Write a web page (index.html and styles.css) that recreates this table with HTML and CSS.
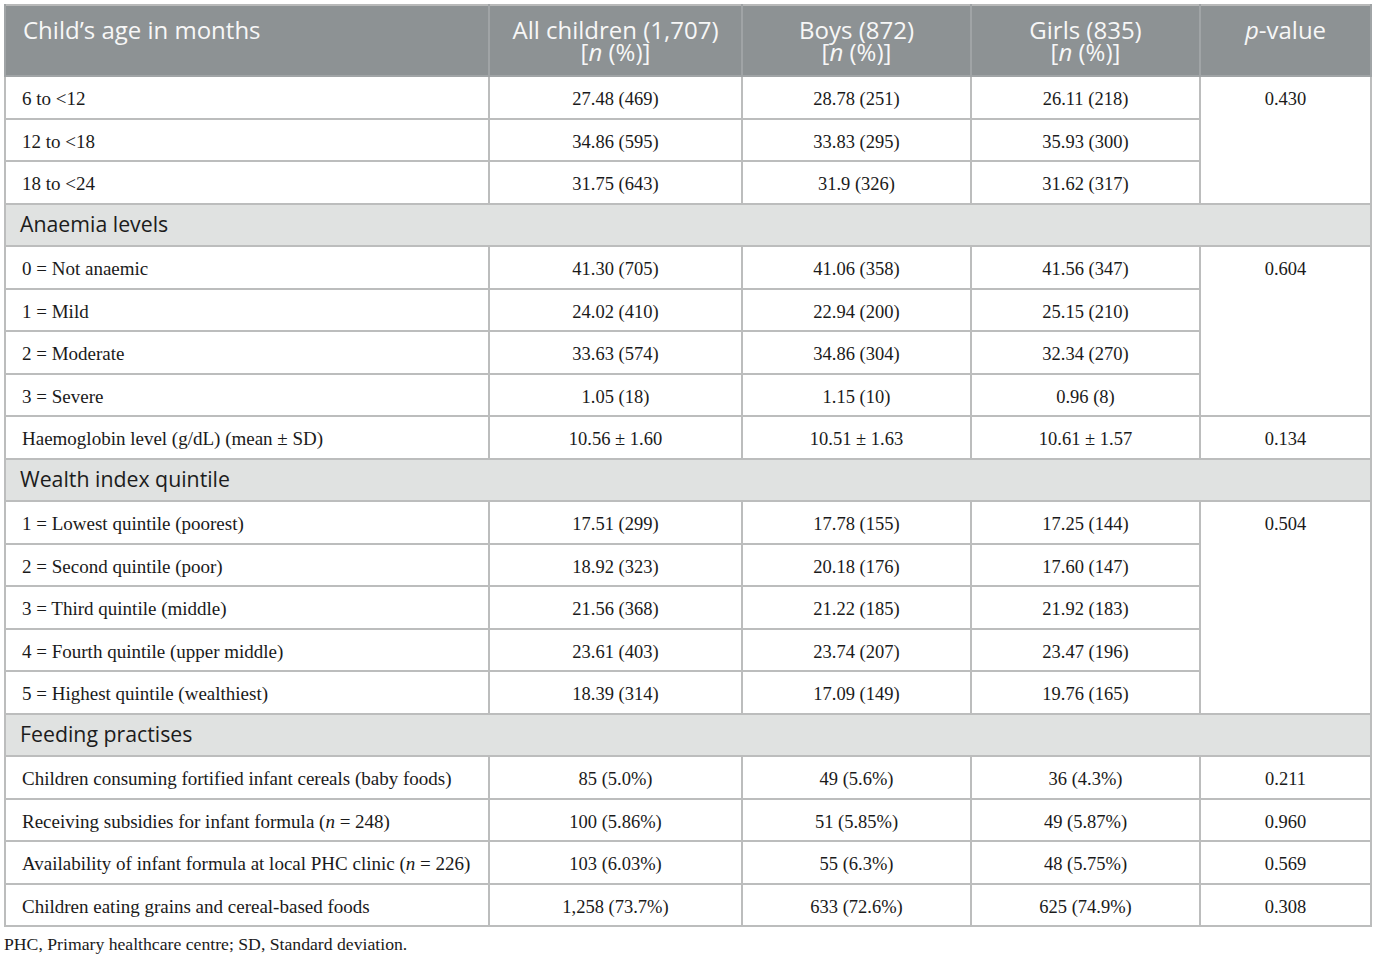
FILE: index.html
```html
<!DOCTYPE html>
<html lang="en">
<head>
<meta charset="utf-8">
<title>Table</title>
<link rel="stylesheet" href="styles.css">
</head>
<body>
<table class="tbl">
  <colgroup>
    <col class="c1"><col class="c2"><col class="c3"><col class="c4"><col class="c5">
  </colgroup>
  <thead>
    <tr class="head">
      <th class="hl">Child’s age in months</th>
      <th>All children (1,707)<br>[<i>n</i> (%)]</th>
      <th>Boys (872)<br>[<i>n</i> (%)]</th>
      <th>Girls (835)<br>[<i>n</i> (%)]</th>
      <th><i>p</i>-value</th>
    </tr>
  </thead>
  <tbody>
    <tr><td class="lab">6 to &lt;12</td><td>27.48 (469)</td><td>28.78 (251)</td><td>26.11 (218)</td><td rowspan="3">0.430</td></tr>
    <tr><td class="lab">12 to &lt;18</td><td>34.86 (595)</td><td>33.83 (295)</td><td>35.93 (300)</td></tr>
    <tr><td class="lab">18 to &lt;24</td><td>31.75 (643)</td><td>31.9 (326)</td><td>31.62 (317)</td></tr>
    <tr class="sec"><td colspan="5">Anaemia levels</td></tr>
    <tr><td class="lab">0 = Not anaemic</td><td>41.30 (705)</td><td>41.06 (358)</td><td>41.56 (347)</td><td rowspan="4">0.604</td></tr>
    <tr><td class="lab">1 = Mild</td><td>24.02 (410)</td><td>22.94 (200)</td><td>25.15 (210)</td></tr>
    <tr><td class="lab">2 = Moderate</td><td>33.63 (574)</td><td>34.86 (304)</td><td>32.34 (270)</td></tr>
    <tr><td class="lab">3 = Severe</td><td>1.05 (18)</td><td>1.15 (10)</td><td>0.96 (8)</td></tr>
    <tr><td class="lab">Haemoglobin level (g/dL) (mean ± SD)</td><td>10.56 ± 1.60</td><td>10.51 ± 1.63</td><td>10.61 ± 1.57</td><td>0.134</td></tr>
    <tr class="sec"><td colspan="5">Wealth index quintile</td></tr>
    <tr><td class="lab">1 = Lowest quintile (poorest)</td><td>17.51 (299)</td><td>17.78 (155)</td><td>17.25 (144)</td><td rowspan="5">0.504</td></tr>
    <tr><td class="lab">2 = Second quintile (poor)</td><td>18.92 (323)</td><td>20.18 (176)</td><td>17.60 (147)</td></tr>
    <tr><td class="lab">3 = Third quintile (middle)</td><td>21.56 (368)</td><td>21.22 (185)</td><td>21.92 (183)</td></tr>
    <tr><td class="lab">4 = Fourth quintile (upper middle)</td><td>23.61 (403)</td><td>23.74 (207)</td><td>23.47 (196)</td></tr>
    <tr><td class="lab">5 = Highest quintile (wealthiest)</td><td>18.39 (314)</td><td>17.09 (149)</td><td>19.76 (165)</td></tr>
    <tr class="sec"><td colspan="5">Feeding practises</td></tr>
    <tr><td class="lab">Children consuming fortified infant cereals (baby foods)</td><td>85 (5.0%)</td><td>49 (5.6%)</td><td>36 (4.3%)</td><td>0.211</td></tr>
    <tr><td class="lab">Receiving subsidies for infant formula (<i>n</i> = 248)</td><td>100 (5.86%)</td><td>51 (5.85%)</td><td>49 (5.87%)</td><td>0.960</td></tr>
    <tr><td class="lab">Availability of infant formula at local PHC clinic (<i>n</i> = 226)</td><td>103 (6.03%)</td><td>55 (6.3%)</td><td>48 (5.75%)</td><td>0.569</td></tr>
    <tr><td class="lab">Children eating grains and cereal-based foods</td><td>1,258 (73.7%)</td><td>633 (72.6%)</td><td>625 (74.9%)</td><td>0.308</td></tr>
  </tbody>
</table>
<p class="note">PHC, Primary healthcare centre; SD, Standard deviation.</p>
</body>
</html>
```
FILE: styles.css
```css
html, body {
  margin: 0;
  padding: 0;
  background: #ffffff;
}
body {
  padding: 4px 0 0 4px;
  font-family: "Liberation Serif", "Times New Roman", serif;
  color: #1a1a1a;
}
.tbl {
  border-collapse: collapse;
  width: 1366px;
  table-layout: fixed;
  border: 2px solid #b8b9b9;
}
.c1 { width: 484px; }
.c2 { width: 253px; }
.c3 { width: 229px; }
.c4 { width: 229px; }
.c5 { width: 171px; }

.head th {
  background: #8d9294;
  color: #f7f7f7;
  font-family: "Open Sans", "Noto Sans", sans-serif;
  font-weight: 400;
  font-size: 24px;
  line-height: 22px;
  height: 71px;
  box-sizing: border-box;
  padding: 13px 6px 6px;
  vertical-align: top;
  text-align: center;
  border: 2px solid #a0a4a6;
  border-top: none;
}
.head th.hl {
  text-align: left;
  padding-left: 17px;
}
td {
  border: 2px solid #bcbdbd;
  font-size: 18.5px;
  line-height: 20px;
  height: 42.5px;
  box-sizing: border-box;
  padding: 12px 6px 6px;
  vertical-align: top;
  text-align: center;
}
td.lab {
  text-align: left;
  padding-left: 16px;
  font-size: 19px;
}
.sec td {
  background: #e0e2e1;
  text-align: left;
  font-family: "Open Sans", "Noto Sans", sans-serif;
  font-size: 21.3px;
  line-height: 22px;
  color: #1c1c1c;
  padding: 8px 8px 8px 14px;
}
.note {
  margin: 7px 0 0 0;
  font-size: 17.7px;
  color: #1a1a1a;
}
```
